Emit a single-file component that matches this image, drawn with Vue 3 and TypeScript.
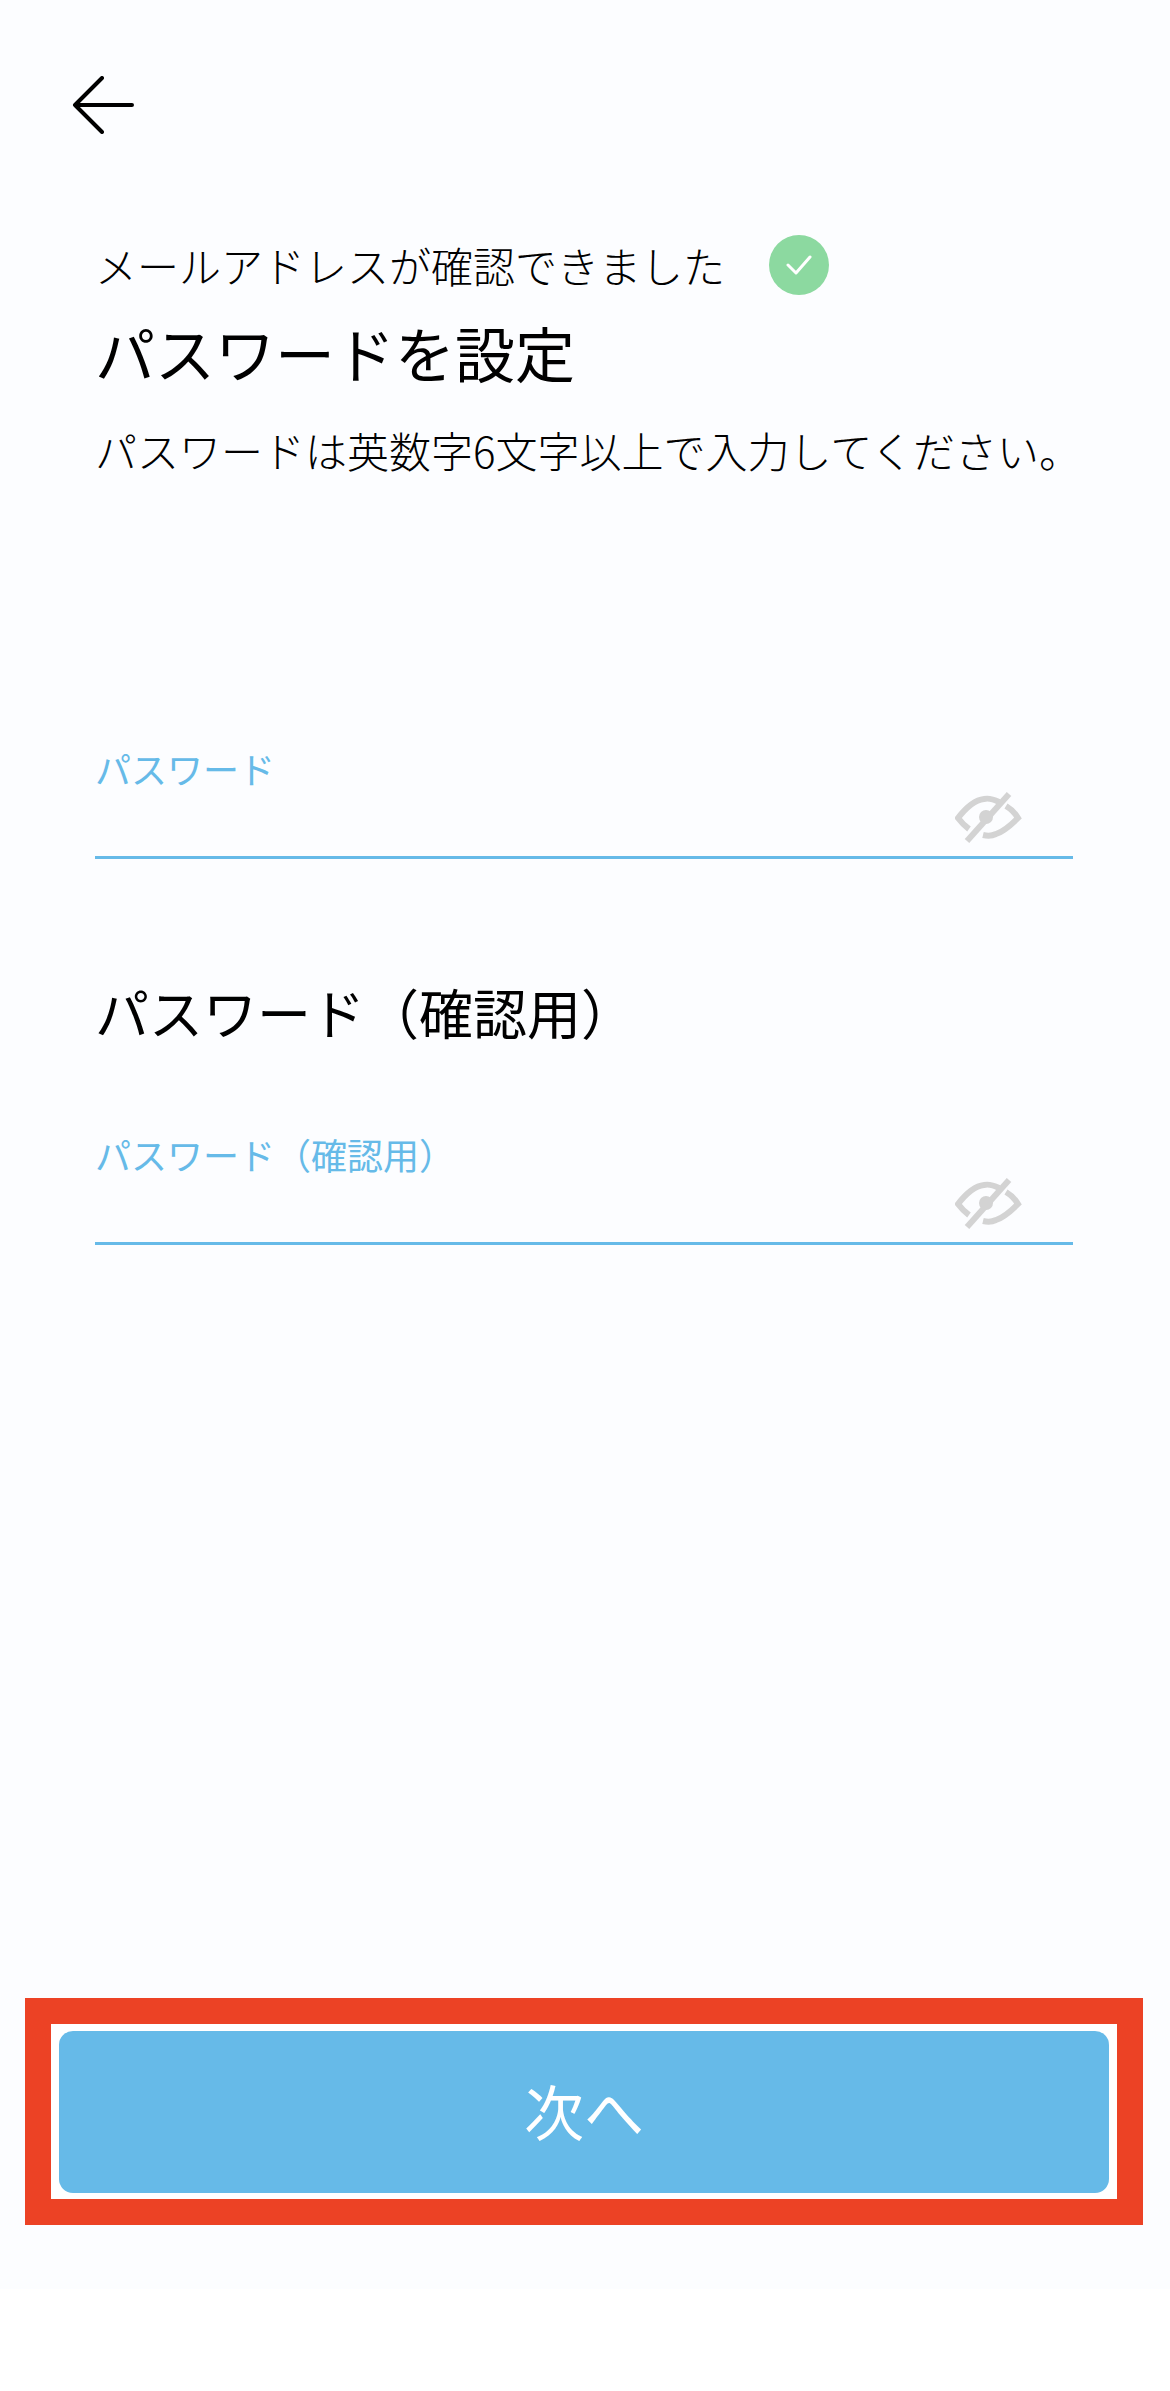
<template>
  <div class="screen">
    <main class="panel">
      <button class="back" type="button" aria-label="戻る">
        <svg width="62" height="58" viewBox="0 0 62 58" fill="none" stroke="#000" stroke-width="4" stroke-linecap="round" stroke-linejoin="round">
          <path d="M30 2 3 29l27 27M3 29h57" />
        </svg>
      </button>

      <section class="intro">
        <div class="verified">
          <span>メールアドレスが確認できました</span>
          <span class="check">
            <svg width="26" height="22" viewBox="0 0 26 22" fill="none" stroke="#fff" stroke-width="3" stroke-linecap="round" stroke-linejoin="round">
              <path d="M2 11l8 8L24 3" />
            </svg>
          </span>
        </div>
        <h1>パスワードを設定</h1>
        <p>パスワードは英数字6文字以上で入力してください。</p>
      </section>

      <div class="field first">
        <label>パスワード</label>
        <svg class="eye" width="68" height="52" viewBox="0 0 68 52" fill="none" stroke="#d3d3d3" stroke-width="6">
          <path d="M44 10C38 7 33 6 29 7 20 8 10 17 3 26c3 4 7 8 11 11" />
          <path d="M28 43c4 1 9 1 13-1 9-3 16-10 22-16-3-5-7-9-12-12" />
          <circle cx="31" cy="25" r="7" fill="#d3d3d3" stroke="none" />
          <path d="M54 2 12 49" />
        </svg>
      </div>

      <h2>パスワード（確認用）</h2>

      <div class="field">
        <label>パスワード（確認用）</label>
        <svg class="eye" width="68" height="52" viewBox="0 0 68 52" fill="none" stroke="#d3d3d3" stroke-width="6">
          <path d="M44 10C38 7 33 6 29 7 20 8 10 17 3 26c3 4 7 8 11 11" />
          <path d="M28 43c4 1 9 1 13-1 9-3 16-10 22-16-3-5-7-9-12-12" />
          <circle cx="31" cy="25" r="7" fill="#d3d3d3" stroke="none" />
          <path d="M54 2 12 49" />
        </svg>
      </div>

      <div class="highlight">
        <button class="next" type="button">次へ</button>
      </div>
    </main>
  </div>
</template>

<script setup lang="ts">
</script>

<style scoped>
.screen {
  width: 1170px;
  height: 2391px;
  background: #fff;
  font-family: "Noto Sans CJK JP", "Noto Sans", sans-serif;
  color: #000;
  overflow: hidden;
}
.panel {
  height: 2289px;
  background: #fcfdff;
  padding: 76px 97px 0 95px;
  box-sizing: border-box;
  display: flex;
  flex-direction: column;
}
.back {
  align-self: flex-start;
  margin-left: -23px;
  padding: 0;
  border: 0;
  background: none;
  display: block;
  height: 58px;
}
.intro {
  margin-top: 101px;
}
.verified {
  display: flex;
  align-items: center;
  gap: 44px;
  font-size: 42px;
  font-weight: 300;
  line-height: 60px;
}
.check {
  width: 60px;
  height: 60px;
  border-radius: 50%;
  background: #8cd9a0;
  display: flex;
  align-items: center;
  justify-content: center;
}
h1 {
  margin: 17px 0 0;
  font-size: 60px;
  font-weight: 400;
  line-height: 80px;
}
p {
  margin: 28px 0 0;
  font-size: 42px;
  font-weight: 300;
  line-height: 60px;
  white-space: nowrap;
}
.field {
  position: relative;
  height: 113px;
  border-bottom: 3px solid #66bae8;
}
.field.first {
  margin-top: 263px;
}
.field label {
  display: block;
  font-size: 36px;
  font-weight: 400;
  line-height: 50px;
  color: #66bae8;
}
.eye {
  position: absolute;
  right: 50px;
  bottom: 12px;
}
h2 {
  margin: 118px 0 82px;
  font-size: 54px;
  font-weight: 400;
  line-height: 70px;
}
.highlight {
  margin: auto -70px 64px -70px;
  border: 26px solid #ec4225;
  background: #fff;
  padding: 7px 8px 6px;
}
.next {
  display: block;
  width: 100%;
  height: 162px;
  padding: 0 0 6px;
  border: 0;
  border-radius: 14px;
  background: #66bae8;
  color: #fff;
  font-family: inherit;
  font-size: 60px;
  font-weight: 400;
}
</style>
